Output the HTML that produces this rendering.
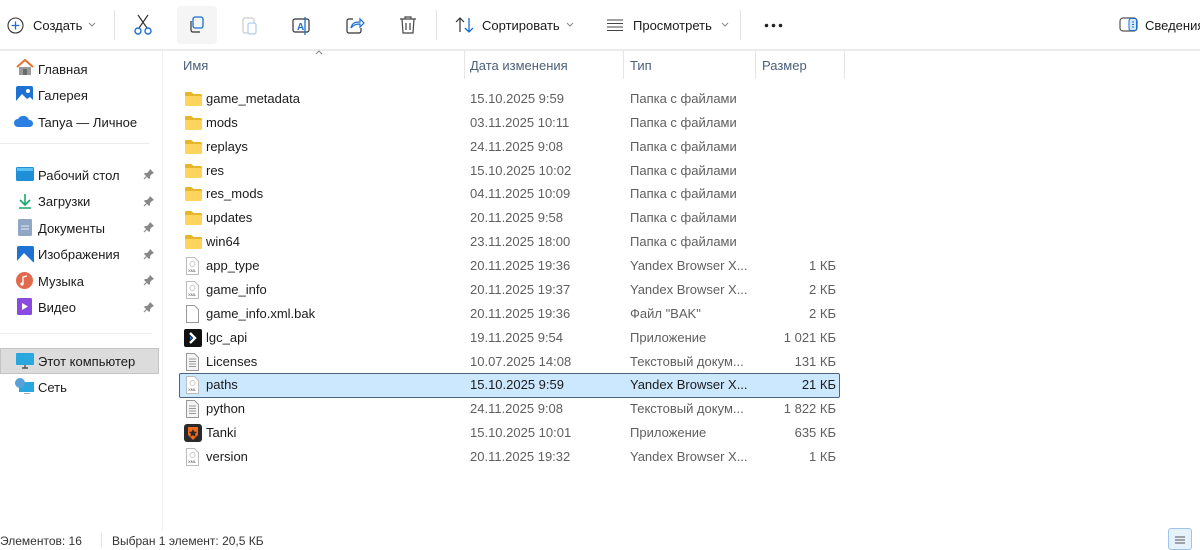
<!DOCTYPE html>
<html><head><meta charset="utf-8"><style>
*{margin:0;padding:0;box-sizing:border-box}
body{width:1200px;height:547px;background:#fff;font-family:"Liberation Sans",sans-serif;font-size:13px;color:#1b1b1b;position:relative;overflow:hidden}
.a{position:absolute;white-space:nowrap}
.g{color:#5f5f5f}
.h{color:#4c607a}
svg{position:absolute}
</style></head><body>
<!-- toolbar -->
<div class="a" style="left:0;top:49px;width:1200px;height:2px;background:#ebebeb"></div>
<svg style="left:7px;top:17px" width="17" height="17" viewBox="0 0 17 17"><circle cx="8.5" cy="8.5" r="7.5" fill="none" stroke="#333" stroke-width="1.1"/><path d="M8.5 4.5v8M4.5 8.5h8" stroke="#1a6fd0" stroke-width="1.3"/></svg>
<div class="a" style="left:33px;top:18px">Создать</div>
<svg style="left:88px;top:22px" width="8" height="5" viewBox="0 0 8 5"><path d="M1 1l3 3 3-3" fill="none" stroke="#888"/></svg>
<div class="a" style="left:114px;top:10px;width:1px;height:30px;background:#e3e3e3"></div>
<svg style="left:133px;top:14px" width="20" height="22" viewBox="0 0 20 22"><path d="M5 1l9 13M15 1l-9 13" stroke="#333" stroke-width="1.2" fill="none"/><circle cx="5" cy="17" r="3" fill="none" stroke="#1a6fd0" stroke-width="1.4"/><circle cx="15" cy="17" r="3" fill="none" stroke="#1a6fd0" stroke-width="1.4"/></svg>
<div class="a" style="left:177px;top:6px;width:40px;height:38px;background:#f5f5f5;border-radius:4px"></div>
<svg style="left:187px;top:15px" width="20" height="20" viewBox="0 0 20 20"><rect x="6" y="2" width="10" height="11" rx="2" fill="none" stroke="#1a6fd0" stroke-width="1.3"/><path d="M4 6v9a2 2 0 0 0 2 2h7" fill="none" stroke="#333" stroke-width="1.2"/></svg>
<svg style="left:240px;top:15px" width="20" height="22" viewBox="0 0 20 22"><rect x="3" y="3" width="11" height="15" rx="2" fill="none" stroke="#ccc" stroke-width="1.2"/><rect x="8" y="8" width="8" height="11" rx="2" fill="#fff" stroke="#a9cdf2" stroke-width="1.2"/></svg>
<svg style="left:291px;top:15px" width="22" height="22" viewBox="0 0 22 22"><rect x="2" y="4" width="16" height="13" rx="2" fill="none" stroke="#333" stroke-width="1.2"/><text x="6" y="15" font-size="10" font-family="Liberation Sans" fill="#1a6fd0" font-weight="bold">A</text><path d="M14 2v18" stroke="#1a6fd0" stroke-width="1.3"/></svg>
<svg style="left:345px;top:15px" width="20" height="20" viewBox="0 0 20 20"><path d="M8 4H4a2 2 0 0 0-2 2v10a2 2 0 0 0 2 2h10a2 2 0 0 0 2-2v-3" fill="none" stroke="#333" stroke-width="1.2"/><path d="M6 13c1-5 4-6 9-6V4l4 4-4 4V9c-4 0-7 1-9 4z" fill="none" stroke="#1a6fd0" stroke-width="1.2"/></svg>
<svg style="left:399px;top:15px" width="18" height="20" viewBox="0 0 18 20"><path d="M1 4h16M6 4V2h6v2M3 4l1 14h10l1-14M7 8v7M11 8v7" fill="none" stroke="#444" stroke-width="1.2"/></svg>
<div class="a" style="left:436px;top:10px;width:1px;height:30px;background:#e3e3e3"></div>
<svg style="left:455px;top:16px" width="20" height="18" viewBox="0 0 20 18"><path d="M5 16V2M1 6l4-4 4 4" fill="none" stroke="#333" stroke-width="1.2"/><path d="M14 2v14M10 12l4 4 4-4" fill="none" stroke="#1a6fd0" stroke-width="1.3"/></svg>
<div class="a" style="left:482px;top:18px">Сортировать</div>
<svg style="left:566px;top:22px" width="8" height="5" viewBox="0 0 8 5"><path d="M1 1l3 3 3-3" fill="none" stroke="#888"/></svg>
<svg style="left:606px;top:19px" width="18" height="13" viewBox="0 0 18 13"><path d="M1 1h16M1 4.5h16M1 8h16M1 11.5h16" stroke="#444" stroke-width="1.1"/></svg>
<div class="a" style="left:633px;top:18px">Просмотреть</div>
<svg style="left:721px;top:22px" width="8" height="5" viewBox="0 0 8 5"><path d="M1 1l3 3 3-3" fill="none" stroke="#888"/></svg>
<div class="a" style="left:740px;top:10px;width:1px;height:30px;background:#e3e3e3"></div>
<svg style="left:764px;top:23px" width="20" height="5" viewBox="0 0 20 5"><circle cx="2.5" cy="2.5" r="1.8" fill="#222"/><circle cx="9.5" cy="2.5" r="1.8" fill="#222"/><circle cx="16.5" cy="2.5" r="1.8" fill="#222"/></svg>
<svg style="left:1119px;top:17px" width="19" height="15" viewBox="0 0 19 15"><rect x="1" y="1" width="17" height="13" rx="3" fill="none" stroke="#555" stroke-width="1.2"/><rect x="10" y="1.5" width="7.5" height="12" rx="2" fill="#d6e8fb" stroke="#1a6fd0" stroke-width="1"/><path d="M13 5h2M13 7.5h2M13 10h2" stroke="#1a6fd0"/></svg>
<div class="a" style="left:1145px;top:18px">Сведения</div>
<!-- sidebar -->
<div class="a" style="left:162px;top:51px;width:1px;height:480px;background:#f0f0f0"></div>
<svg style="left:16px;top:59px" width="18" height="17" viewBox="0 0 18 17"><path d="M1 8L9 1l8 7" fill="none" stroke="#e8712b" stroke-width="2"/><path d="M3 8v8h12V8" fill="#9a9a9a"/><rect x="7" y="10" width="4" height="6" fill="#6a6a6a"/></svg>
<div class="a" style="left:38px;top:62px">Главная</div>
<svg style="left:16px;top:86px" width="17" height="17" viewBox="0 0 17 17"><rect width="17" height="17" rx="2" fill="#1e72d4"/><path d="M0 15l6-7 5 5 3-2 3 3v3H0z" fill="#fff"/><circle cx="12" cy="5" r="2" fill="#fff"/></svg>
<div class="a" style="left:38px;top:88px">Галерея</div>
<svg style="left:14px;top:115px" width="20" height="13" viewBox="0 0 20 13"><path d="M4 12a4 4 0 0 1 0-8 6 6 0 0 1 11 1 3.5 3.5 0 0 1 1 7z" fill="#2b7fe0"/></svg>
<div class="a" style="left:38px;top:115px">Tanya — Личное</div>
<div class="a" style="left:0;top:143px;width:150px;height:1px;background:#ececec"></div>
<svg style="left:16px;top:167px" width="18" height="14" viewBox="0 0 18 14"><rect width="18" height="14" rx="1.5" fill="#1f8fd8"/><rect x="1" y="1" width="16" height="3" fill="#5cc0f0"/></svg>
<div class="a" style="left:38px;top:168px">Рабочий стол</div>
<svg style="left:17px;top:193px" width="16" height="16" viewBox="0 0 16 16"><path d="M8 1v10M3 7l5 5 5-5M2 15h12" fill="none" stroke="#18a86b" stroke-width="1.6"/></svg>
<div class="a" style="left:38px;top:194px">Загрузки</div>
<svg style="left:18px;top:219px" width="14" height="17" viewBox="0 0 14 17"><rect width="14" height="17" rx="1.5" fill="#8fa6c4"/><path d="M3 7h8M3 10h8" stroke="#e5ecf5"/></svg>
<div class="a" style="left:38px;top:221px">Документы</div>
<svg style="left:17px;top:246px" width="17" height="17" viewBox="0 0 17 17"><rect width="17" height="17" rx="2" fill="#1e72d4"/><path d="M0 15l7-8 10 10H0z" fill="#fff"/></svg>
<div class="a" style="left:38px;top:247px">Изображения</div>
<svg style="left:16px;top:272px" width="17" height="17" viewBox="0 0 17 17"><circle cx="8.5" cy="8.5" r="8.5" fill="#e0694e"/><path d="M7 12V5l4-1" fill="none" stroke="#fff" stroke-width="1.3"/><circle cx="6" cy="12" r="1.6" fill="#fff"/></svg>
<div class="a" style="left:38px;top:274px">Музыка</div>
<svg style="left:17px;top:298px" width="15" height="17" viewBox="0 0 15 17"><rect width="15" height="17" rx="1.5" fill="#8a4ae0"/><path d="M5 5l6 3.5L5 12z" fill="#fff"/></svg>
<div class="a" style="left:38px;top:300px">Видео</div>
<div id="pins"></div>
<div class="a" style="left:0;top:333px;width:152px;height:1px;background:#ececec"></div>
<div class="a" style="left:0;top:348px;width:159px;height:26px;background:#dcdcdc;border:1px solid #c4c4c4"></div>
<svg style="left:16px;top:353px" width="18" height="16" viewBox="0 0 18 16"><rect width="18" height="12" rx="1" fill="#2aa8de"/><path d="M6 15h6M9 12v3" stroke="#555" stroke-width="1.4"/></svg>
<div class="a" style="left:38px;top:354px">Этот компьютер</div>
<svg style="left:15px;top:378px" width="19" height="16" viewBox="0 0 19 16"><rect x="4" y="4" width="15" height="10" fill="#2aa8de"/><circle cx="5" cy="5" r="5" fill="#5aa0d8"/><path d="M9 16h6" stroke="#555"/></svg>
<div class="a" style="left:38px;top:380px">Сеть</div>
<!-- header -->
<svg style="left:315px;top:50px" width="8" height="5" viewBox="0 0 8 5"><path d="M1 4l3-3 3 3" fill="none" stroke="#888"/></svg>
<div class="a h" style="left:183px;top:58px">Имя</div>
<div class="a h" style="left:470px;top:58px">Дата изменения</div>
<div class="a h" style="left:630px;top:58px">Тип</div>
<div class="a h" style="left:762px;top:58px">Размер</div>
<div class="a" style="left:464px;top:51px;width:1px;height:28px;background:#e5e5e5"></div>
<div class="a" style="left:623px;top:51px;width:1px;height:28px;background:#e5e5e5"></div>
<div class="a" style="left:755px;top:51px;width:1px;height:28px;background:#e5e5e5"></div>
<div class="a" style="left:844px;top:51px;width:1px;height:28px;background:#e5e5e5"></div>
<!-- selection -->
<div class="a" style="left:179px;top:373px;width:661px;height:25px;background:#cce8ff;border:1px solid #4a6584;border-radius:2px"></div>
<div id="rows"></div>
<script>
var P='';
for(var j=0;j<6;j++){P+='<svg style="left:143px;top:'+(168+j*26.5)+'px" width="12" height="12" viewBox="0 0 12 12"><path d="M7 1l4 4-2 1-2 2 0 2-1 1-5-5 1-1 2 0 2-2z" fill="#888"/><path d="M3.5 8.5L1 11" stroke="#888" stroke-width="1.2"/></svg>';}
document.getElementById('pins').innerHTML=P;
var F='<svg style="left:185px;top:4px" width="17" height="14" viewBox="0 0 17 14"><path d="M0 1.5A1.5 1.5 0 0 1 1.5 0h5l2 2h7A1.5 1.5 0 0 1 17 3.5V13H0z" fill="#e8b42a"/><rect y="4" width="17" height="10" rx="1" fill="#ffd45e"/></svg>';
var X='<svg style="left:186px;top:2px" width="13" height="18" viewBox="0 0 13 18"><path d="M.5.5h8l4 4v13H.5z" fill="#fff" stroke="#bbb"/><circle cx="6.5" cy="7" r="2.5" fill="none" stroke="#ccc"/><text x="2" y="15" font-size="4" fill="#444" font-family="Liberation Sans">XML</text></svg>';
var B='<svg style="left:186px;top:2px" width="13" height="18" viewBox="0 0 13 18"><path d="M.5.5h8l4 4v13H.5z" fill="#fff" stroke="#999"/></svg>';
var T='<svg style="left:186px;top:2px" width="13" height="18" viewBox="0 0 13 18"><path d="M.5.5h8l4 4v13H.5z" fill="#f4f4f4" stroke="#999"/><path d="M3 6h7M3 8.5h7M3 11h7M3 13.5h7" stroke="#999"/></svg>';
var L='<svg style="left:184px;top:2px" width="18" height="18" viewBox="0 0 18 18"><rect width="18" height="18" rx="2" fill="#111"/><path d="M6 4l5 5-5 5" fill="none" stroke="#fff" stroke-width="2.4"/><path d="M6 7l2 2-2 2z" fill="#2a7de1"/></svg>';
var K='<svg style="left:184px;top:2px" width="18" height="18" viewBox="0 0 18 18"><rect width="18" height="18" rx="3" fill="#2a2a2a"/><path d="M4 3h10v8l-5 5-5-5z" fill="#f06a1d"/><path d="M9 5l1.2 2.6 2.8.3-2 2 .6 2.8L9 11.3l-2.6 1.4.6-2.8-2-2 2.8-.3z" fill="#2a2a2a"/></svg>';
var d=[[F,'game_metadata','15.10.2025 9:59','Папка с файлами',''],[F,'mods','03.11.2025 10:11','Папка с файлами',''],[F,'replays','24.11.2025 9:08','Папка с файлами',''],[F,'res','15.10.2025 10:02','Папка с файлами',''],[F,'res_mods','04.11.2025 10:09','Папка с файлами',''],[F,'updates','20.11.2025 9:58','Папка с файлами',''],[F,'win64','23.11.2025 18:00','Папка с файлами',''],[X,'app_type','20.11.2025 19:36','Yandex Browser X...','1 КБ'],[X,'game_info','20.11.2025 19:37','Yandex Browser X...','2 КБ'],[B,'game_info.xml.bak','20.11.2025 19:36','Файл "BAK"','2 КБ'],[L,'lgc_api','19.11.2025 9:54','Приложение','1 021 КБ'],[T,'Licenses','10.07.2025 14:08','Текстовый докум...','131 КБ'],[X,'paths','15.10.2025 9:59','Yandex Browser X...','21 КБ'],[T,'python','24.11.2025 9:08','Текстовый докум...','1 822 КБ'],[K,'Tanki','15.10.2025 10:01','Приложение','635 КБ'],[X,'version','20.11.2025 19:32','Yandex Browser X...','1 КБ']];
var h='';
d.forEach(function(r,i){var t=88+i*23.87;var s=i==12;
h+='<div class="a" style="left:0;top:'+t+'px;width:900px;height:22px;line-height:22px">'+r[0]+
'<div class="a" style="left:206px;top:0">'+r[1]+'</div>'+
'<div class="a" style="left:470px;top:0;color:'+(s?'#1b1b1b':'#5f5f5f')+'">'+r[2]+'</div>'+
'<div class="a" style="left:630px;top:0;color:'+(s?'#1b1b1b':'#5f5f5f')+'">'+r[3]+'</div>'+
'<div class="a" style="right:64px;top:0;color:'+(s?'#1b1b1b':'#5f5f5f')+'">'+r[4]+'</div></div>';});
document.getElementById('rows').innerHTML=h;
</script>
<!-- status -->
<div class="a" style="left:0;top:534px;font-size:12px;color:#333">Элементов: 16</div>
<div class="a" style="left:101px;top:533px;width:1px;height:14px;background:#e5e5e5"></div>
<div class="a" style="left:112px;top:534px;font-size:12px;color:#333">Выбран 1 элемент: 20,5 КБ</div>
<div class="a" style="left:1168px;top:528px;width:24px;height:22px;background:#e5f1fb;border:1px solid #9cc5ea;border-radius:3px"></div>
<svg style="left:1175px;top:535px" width="10" height="10" viewBox="0 0 10 10"><path d="M0 2h10M0 5h10M0 8h10" stroke="#555"/></svg>
</body></html>
